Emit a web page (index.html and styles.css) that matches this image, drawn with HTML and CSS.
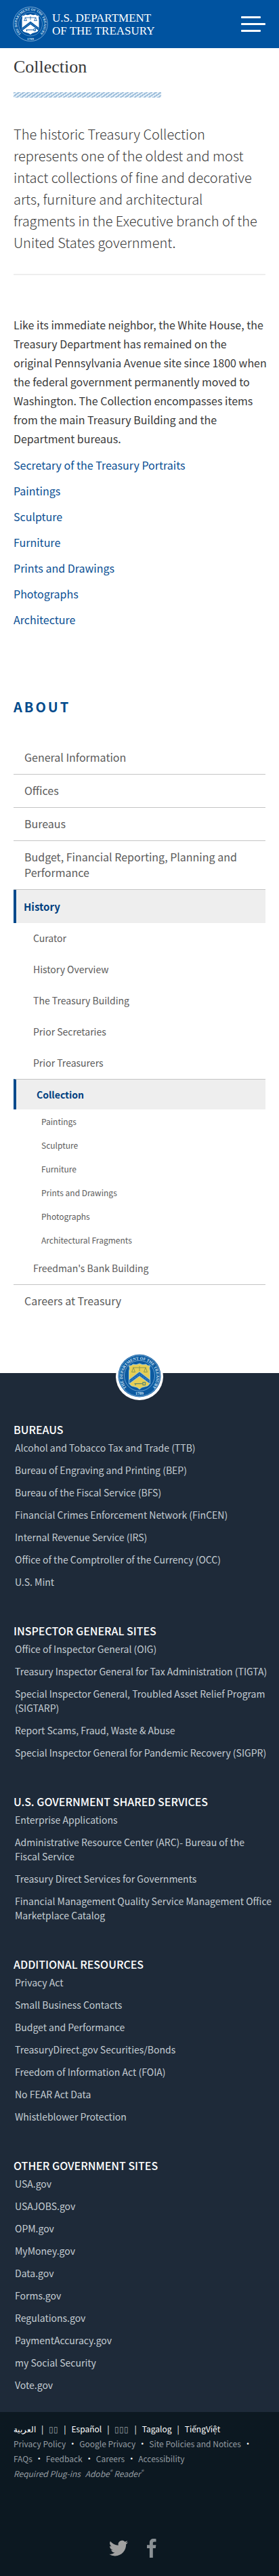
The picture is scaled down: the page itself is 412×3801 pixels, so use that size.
FILE: index.html
```html
<!DOCTYPE html>
<html lang="en">
<head>
<meta charset="utf-8">
<meta name="viewport" content="width=device-width, initial-scale=1">
<title>Collection | U.S. Department of the Treasury</title>
<link rel="stylesheet" href="styles.css">
</head>
<body>
<header class="site-header">
  <a class="brand" href="#">
    <svg class="brand-seal" viewBox="0 0 104 104" aria-hidden="true">
      <defs>
        <path id="arc-white" d="M22.5 79 A40 40 0 1 1 81.500 79"/>
      </defs>
      <circle cx="52" cy="52" r="50.500" fill="none" stroke="#9fc4e6" stroke-width="1.500"/>
      <circle cx="52" cy="52" r="35" fill="none" stroke="#6ea3d4" stroke-width="1.500"/>
      <text class="seal-text seal-text-white"><textPath href="#arc-white" startOffset="50%" text-anchor="middle">THE DEPARTMENT OF THE TREASURY</textPath></text>
      <text class="seal-text seal-text-white" x="52" y="98" text-anchor="middle">1789</text>
      <path d="M27 27 Q33 29 37 24 Q45 27 52 23 Q59 27 67 24 Q71 29 77 27 Q75 33 77 40 V64 Q77 75 65 77 Q57 78 52 83 Q47 78 39 77 Q27 75 27 64 V40 Q29 33 27 27Z" fill="#fff"/>
      <path d="M27 63 L52 44 L77 63 V72 L52 53 L27 72Z" fill="#0055a4"/>
      <path d="M27 67.500 L52 48.500 L77 67.500" fill="none" stroke="#fff" stroke-width="1.500" stroke-dasharray="2 3"/>
      <path d="M35 33 H69 M52 29 V40 M37 33 L33 42 H41Z M67 33 L63 42 H71Z" fill="none" stroke="#0055a4" stroke-width="1.500"/>
      <path d="M39 69 H62 M62 66 h5 v6 h-5z M41 69 v4" fill="none" stroke="#0055a4" stroke-width="2"/>
    </svg>
    <span class="brand-name">U.S. DEPARTMENT<br>OF THE TREASURY</span>
  </a>
  <button class="menu-button" type="button" aria-label="Menu">
    <span class="menu-line menu-line-short"></span>
    <span class="menu-line"></span>
    <span class="menu-line menu-line-short"></span>
  </button>
</header>

<main class="content">
  <h1 class="page-title">Collection</h1>
  <div class="title-rule"></div>
  <p class="lead">The historic Treasury Collection represents one of the oldest and most intact collections of fine and decorative arts, furniture and architectural fragments in the Executive branch of the United States government.</p>
  <p class="body-text">Like its immediate neighbor, the White House, the Treasury Department has remained on the<br>original Pennsylvania Avenue site since 1800 when the federal government permanently moved to Washington. The Collection encompasses items from the main Treasury Building and the Department bureaus.</p>
  <ul class="link-list">
    <li><a href="#">Secretary of the Treasury Portraits</a></li>
    <li><a href="#">Paintings</a></li>
    <li><a href="#">Sculpture</a></li>
    <li><a href="#">Furniture</a></li>
    <li><a href="#">Prints and Drawings</a></li>
    <li><a href="#">Photographs</a></li>
    <li><a href="#">Architecture</a></li>
  </ul>
</main>

<nav class="section-nav" aria-labelledby="section-nav-title">
  <h2 class="section-nav-title" id="section-nav-title">ABOUT</h2>
  <ul class="nav-list">
    <li><a class="nav-link" href="#">General Information</a></li>
    <li><a class="nav-link" href="#">Offices</a></li>
    <li><a class="nav-link" href="#">Bureaus</a></li>
    <li><a class="nav-link" href="#">Budget, Financial Reporting, Planning and Performance</a></li>
    <li>
      <a class="nav-link nav-link-active" href="#">History</a>
      <ul class="nav-list">
        <li><a class="sub-link" href="#">Curator</a></li>
        <li><a class="sub-link" href="#">History Overview</a></li>
        <li><a class="sub-link" href="#">The Treasury Building</a></li>
        <li><a class="sub-link" href="#">Prior Secretaries</a></li>
        <li><a class="sub-link" href="#">Prior Treasurers</a></li>
        <li>
          <a class="sub-link sub-link-active" href="#" aria-current="page">Collection</a>
          <ul class="nav-list leaf-list">
            <li><a class="leaf-link" href="#">Paintings</a></li>
            <li><a class="leaf-link" href="#">Sculpture</a></li>
            <li><a class="leaf-link" href="#">Furniture</a></li>
            <li><a class="leaf-link" href="#">Prints and Drawings</a></li>
            <li><a class="leaf-link" href="#">Photographs</a></li>
            <li><a class="leaf-link" href="#">Architectural Fragments</a></li>
          </ul>
        </li>
        <li><a class="sub-link" href="#">Freedman's Bank Building</a></li>
      </ul>
    </li>
    <li><a class="nav-link nav-link-last" href="#">Careers at Treasury</a></li>
  </ul>
</nav>

<footer>
  <div class="footer-main">
    <svg class="footer-seal" viewBox="0 0 140 140" role="img" aria-label="Treasury seal">
      <defs>
        <path id="arc-color" d="M32 103 A50 50 0 1 1 108 103"/>
      </defs>
      <circle cx="70" cy="70" r="70" fill="#fff"/>
      <circle cx="70" cy="68" r="63" fill="#0c5aa0"/>
      <circle cx="70" cy="68" r="60.500" fill="none" stroke="#8dbbe0" stroke-width="1.500"/>
      <circle cx="70" cy="68" r="45" fill="none" stroke="#8dbbe0" stroke-width="1.500"/>
      <text class="seal-text seal-text-color"><textPath href="#arc-color" startOffset="50%" text-anchor="middle">THE DEPARTMENT OF THE TREASURY</textPath></text>
      <text class="seal-text seal-text-color" x="70" y="124" text-anchor="middle">1789</text>
      <path d="M39 38 Q46 40 51 34 Q60 38 70 32 Q80 38 89 34 Q94 40 101 38 Q98 46 101 54 V84 Q101 98 86 100 Q76 101 70 108 Q64 101 54 100 Q39 98 39 84 V54 Q42 46 39 38Z" fill="#e6ce55" stroke="#b7e0ea" stroke-width="1.500"/>
      <path d="M39 80 L70 56 L101 80 V92 L70 69 L39 92Z" fill="#1c68b0" stroke="#a8d4ee" stroke-width="1.500"/>
      <path d="M43 83 L70 63 L97 83" fill="none" stroke="#9ed0ef" stroke-width="1.500" stroke-dasharray="2 6"/>
      <path d="M50 44 H90 M70 40 V54 M52 44 L47 57 H57Z M88 44 L83 57 H93Z" fill="none" stroke="#8b9850" stroke-width="2"/>
      <path d="M55 91 H80 M80 87 h7 v8 h-7z M58 91 v5" fill="none" stroke="#5e8a72" stroke-width="2.500"/>
    </svg>
    <section class="footer-group">
      <h2 class="footer-title">BUREAUS</h2>
      <ul class="footer-list">
        <li><a href="#">Alcohol and Tobacco Tax and Trade (TTB)</a></li>
        <li><a href="#">Bureau of Engraving and Printing (BEP)</a></li>
        <li><a href="#">Bureau of the Fiscal Service (BFS)</a></li>
        <li><a href="#">Financial Crimes Enforcement Network (FinCEN)</a></li>
        <li><a href="#">Internal Revenue Service (IRS)</a></li>
        <li><a href="#">Office of the Comptroller of the Currency (OCC)</a></li>
        <li><a href="#">U.S. Mint</a></li>
      </ul>
    </section>
    <section class="footer-group">
      <h2 class="footer-title">INSPECTOR GENERAL SITES</h2>
      <ul class="footer-list">
        <li><a href="#">Office of Inspector General (OIG)</a></li>
        <li><a href="#">Treasury Inspector General for Tax Administration (TIGTA)</a></li>
        <li><a href="#">Special Inspector General, Troubled Asset Relief Program (SIGTARP)</a></li>
        <li><a href="#">Report Scams, Fraud, Waste &amp; Abuse</a></li>
        <li><a href="#">Special Inspector General for Pandemic Recovery (SIGPR)</a></li>
      </ul>
    </section>
    <section class="footer-group">
      <h2 class="footer-title">U.S. GOVERNMENT SHARED SERVICES</h2>
      <ul class="footer-list">
        <li><a href="#">Enterprise Applications</a></li>
        <li><a href="#">Administrative Resource Center (ARC)- Bureau of the<br>Fiscal Service</a></li>
        <li><a href="#">Treasury Direct Services for Governments</a></li>
        <li><a href="#">Financial Management Quality Service Management Office Marketplace Catalog</a></li>
      </ul>
    </section>
    <section class="footer-group">
      <h2 class="footer-title">ADDITIONAL RESOURCES</h2>
      <ul class="footer-list">
        <li><a href="#">Privacy Act</a></li>
        <li><a href="#">Small Business Contacts</a></li>
        <li><a href="#">Budget and Performance</a></li>
        <li><a href="#">TreasuryDirect.gov Securities/Bonds</a></li>
        <li><a href="#">Freedom of Information Act (FOIA)</a></li>
        <li><a href="#">No FEAR Act Data</a></li>
        <li><a href="#">Whistleblower Protection</a></li>
      </ul>
    </section>
    <section class="footer-group">
      <h2 class="footer-title">OTHER GOVERNMENT SITES</h2>
      <ul class="footer-list">
        <li><a href="#">USA.gov</a></li>
        <li><a href="#">USAJOBS.gov</a></li>
        <li><a href="#">OPM.gov</a></li>
        <li><a href="#">MyMoney.gov</a></li>
        <li><a href="#">Data.gov</a></li>
        <li><a href="#">Forms.gov</a></li>
        <li><a href="#">Regulations.gov</a></li>
        <li><a href="#">PaymentAccuracy.gov</a></li>
        <li><a href="#">my Social Security</a></li>
        <li><a href="#">Vote.gov</a></li>
      </ul>
    </section>
  </div>
  <div class="footer-bottom">
    <ul class="language-list">
      <li><a href="#" lang="ar">العربية</a></li>
      <li><a class="boxed" href="#">▯▯</a></li>
      <li><a href="#" lang="es">Español</a></li>
      <li><a class="boxed" href="#">▯▯▯</a></li>
      <li><a href="#" lang="tl">Tagalog</a></li>
      <li><a href="#" lang="vi">TiếngViệt</a></li>
    </ul>
    <ul class="policy-list">
      <li><a href="#">Privacy Policy</a></li>
      <li><a href="#">Google Privacy</a></li>
      <li><a href="#">Site Policies and Notices</a></li>
      <li><a href="#">FAQs</a></li>
      <li><a href="#">Feedback</a></li>
      <li><a href="#">Careers</a></li>
      <li><a href="#">Accessibility</a></li>
    </ul>
    <p class="plugins"><span>Required Plug-ins</span> <a href="#">Adobe<sup>®</sup> Reader<sup>®</sup></a></p>
    <div class="social">
      <a href="#" aria-label="Twitter"><svg class="icon-twitter" viewBox="0 0 24 24" aria-hidden="true"><path d="M23.950 4.570a10 10 0 0 1-2.820.780 4.960 4.960 0 0 0 2.160-2.720c-.950.550-2 .960-3.130 1.180a4.920 4.920 0 0 0-8.380 4.480C7.690 8.100 4.070 6.130 1.640 3.160a4.820 4.820 0 0 0-.670 2.480c0 1.710.870 3.210 2.190 4.100a4.900 4.900 0 0 1-2.230-.620v.060a4.920 4.920 0 0 0 3.950 4.830 5 5 0 0 1-2.210.080 4.940 4.940 0 0 0 4.600 3.420A9.870 9.870 0 0 1 0 19.540a13.990 13.990 0 0 0 7.560 2.210c9.050 0 14-7.500 14-13.980 0-.210 0-.420-.020-.630a9.940 9.940 0 0 0 2.410-2.570z"/></svg></a>
      <a href="#" aria-label="Facebook"><svg class="icon-facebook" viewBox="0 0 14 28" aria-hidden="true"><path d="M13.500.200v4.400h-2.600c-1.600 0-2.100.900-2.100 2.100v2.600h4.600l-.600 4.800h-4V28H3.900V14.100H0V9.300h3.900V5.900C3.900 2 6.300 0 9.900 0c1.700 0 3.100.100 3.600.200z"/></svg></a>
    </div>
  </div>
</footer>
</body>
</html>
```

FILE: styles.css
```css
* {
  box-sizing: border-box;
}

body {
  margin: 0;
  background: #fff;
  color: #3a3a3a;
  font-family: "Noto Sans CJK SC", "Noto Sans", sans-serif;
  font-size: 16px;
  line-height: 28px;
}

h1, h2, p, ul {
  margin: 0;
  padding: 0;
}

ul {
  list-style: none;
}

a {
  text-decoration: none;
}

.site-header {
  display: flex;
  align-items: center;
  justify-content: space-between;
  padding: 9px 20px 9px 19px;
  background: #0053a0;
}

.brand {
  display: flex;
  align-items: center;
  gap: 6px;
  color: #fff;
}

.brand-seal {
  width: 52px;
  height: 53px;
}

.brand-name {
  font-family: "Liberation Serif", serif;
  font-size: 17px;
  line-height: 19px;
}

.seal-text {
  font-family: "Liberation Serif", serif;
  font-weight: bold;
}

.seal-text-white {
  fill: #d6e6f5;
  font-size: 10px;
}

.seal-text-color {
  fill: #cfe4f4;
  font-size: 12px;
}

.menu-button {
  display: flex;
  flex-direction: column;
  gap: 7px;
  width: 36px;
  padding: 0;
  border: 0;
  background: none;
}

.menu-line {
  width: 36px;
  height: 3px;
  border-radius: 1px;
  background: #fff;
}

.menu-line-short {
  width: 29px;
}

.content {
  padding: 11px 20px 0;
}

.page-title {
  font-family: "Liberation Serif", serif;
  font-size: 26px;
  font-weight: normal;
  line-height: 34px;
}

.title-rule {
  width: 218px;
  height: 8px;
  margin-top: 20px;
  background: repeating-linear-gradient(145deg, #a0bfdb 0 2px, #e6f1f9 2px 4px);
}

.lead {
  margin-top: 38px;
  padding-bottom: 30px;
  border-bottom: 2px solid #eee;
  font-size: 20px;
  font-weight: 300;
  line-height: 32px;
}

.body-text {
  margin: 59px -10px 0 0;
}

.link-list {
  display: flex;
  flex-direction: column;
  gap: 10px;
  margin-top: 11px;
}

.link-list a {
  color: #0a4f94;
}

.section-nav {
  padding: 101px 20px 82px;
}

.section-nav-title {
  color: #004a8c;
  font-size: 20px;
  font-weight: bold;
  line-height: 28px;
  letter-spacing: 3px;
}

.section-nav-title + .nav-list {
  margin-top: 37px;
}

.nav-link {
  display: block;
  padding: 12px 16px 13px;
  border-bottom: 1px solid #c4c4c4;
  color: #5b5b5b;
  line-height: 23px;
}

.nav-link-active {
  padding: 13px 11px;
  border-bottom: 0;
  border-left: 4px solid #004a8c;
  background: #eee;
  color: #004080;
  font-size: 15px;
  font-weight: bold;
}

.nav-link-last {
  border-top: 1px solid #c4c4c4;
  border-bottom: 0;
}

.sub-link {
  display: block;
  padding: 12px 29px 13px;
  color: #5b5b5b;
  font-size: 14px;
  line-height: 21px;
}

.sub-link-active {
  padding: 12px 29px 11px 30px;
  border-top: 1px solid #c4c4c4;
  border-left: 4px solid #004a8c;
  background: #eee;
  color: #004080;
  font-weight: bold;
}

.leaf-list {
  padding-bottom: 2px;
}

.leaf-link {
  display: block;
  padding: 8px 41px;
  color: #5b5b5b;
  font-size: 12px;
  line-height: 19px;
}

.footer-main {
  display: flex;
  flex-direction: column;
  gap: 50px;
  padding: 0 20px 29px;
  background: #1e2a39;
}

.footer-seal {
  align-self: center;
  width: 70px;
  height: 70px;
  margin: -30px 0 -18px;
}

.footer-group {
  margin-right: -10px;
}

.footer-title {
  margin-bottom: 6px;
  color: #fff;
  font-size: 16px;
  font-weight: 500;
  line-height: 22px;
}

.footer-list {
  display: flex;
  flex-direction: column;
  gap: 12px;
  padding-left: 2px;
  font-size: 14px;
  line-height: 21px;
}

.footer-list a {
  color: #c5cdd3;
}

.footer-bottom {
  padding: 14px 20px 27px;
  background: #0c1821;
  color: #fff;
  font-size: 12px;
  line-height: 22px;
}

.language-list,
.policy-list {
  display: flex;
  flex-wrap: wrap;
}

.language-list a {
  color: #fff;
}

.language-list .boxed {
  color: #9aa2a8;
}

.language-list li:not(:last-child)::after {
  content: "|";
  padding: 0 8px;
}

.policy-list a {
  color: #949ca2;
}

.policy-list li:not(:last-child)::after {
  content: "•";
  padding: 0 4px;
}

.plugins {
  color: #949ca2;
  font-style: italic;
}

.plugins a {
  margin-left: 4px;
  color: #949ca2;
}

.plugins sup {
  font-size: 8px;
  line-height: 8px;
}

.social {
  display: flex;
  align-items: center;
  justify-content: center;
  gap: 28px;
  margin: 85px 20px 0 0;
}

.social a {
  display: flex;
}

.icon-twitter {
  width: 28px;
  height: 28px;
  fill: #a0a0a0;
}

.icon-facebook {
  width: 14px;
  height: 28px;
  fill: #8a9094;
}
```
